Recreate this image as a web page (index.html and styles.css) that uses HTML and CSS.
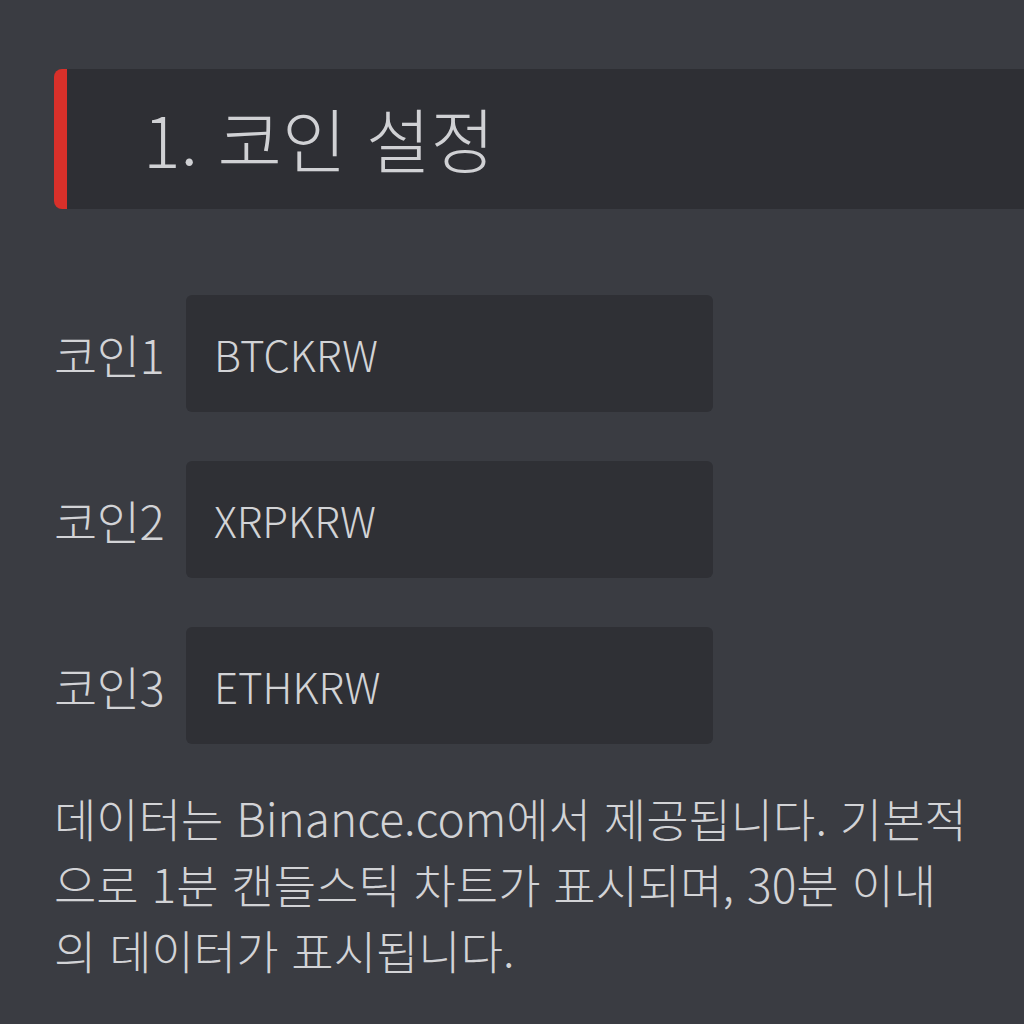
FILE: index.html
```html
<!DOCTYPE html>
<html lang="ko">
<head>
    <meta charset="UTF-8">
    <meta name="viewport" content="width=device-width, initial-scale=1.0">
    <title>코인 설정</title>
    <link rel="stylesheet" href="styles.css">
</head>
<body>
    <div class="settings">
        <div class="section-header">
            <h1>1. 코인 설정</h1>
        </div>
        <div class="coin-list">
            <div class="coin-row">
                <label for="coin1">코인1</label>
                <input type="text" id="coin1" value="BTCKRW">
            </div>
            <div class="coin-row">
                <label for="coin2">코인2</label>
                <input type="text" id="coin2" value="XRPKRW">
            </div>
            <div class="coin-row">
                <label for="coin3">코인3</label>
                <input type="text" id="coin3" value="ETHKRW">
            </div>
        </div>
        <p class="note">데이터는 Binance.com에서 제공됩니다. 기본적으로 1분 캔들스틱 차트가 표시되며, 30분 이내의 데이터가 표시됩니다.</p>
    </div>
</body>
</html>
```

FILE: styles.css
```css
html, body {
    margin: 0;
    height: 100%;
}
body {
    background: #3a3c42;
    color: #d2d3d6;
    font-family: 'Noto Sans CJK KR', 'Noto Sans', sans-serif;
    font-weight: 300;
}
.settings {
    padding: 69px 0 0 54px;
}
.section-header {
    background: #2e2f34;
    border-left: 13px solid #d8302a;
    border-radius: 8px 0 0 8px;
    height: 140px;
    display: flex;
    align-items: center;
    padding-left: 76px;
}
.section-header h1 {
    margin: 0 0 4px;
    font-size: 70px;
    font-weight: 300;
    color: #d0d1d4;
}
.coin-list {
    display: flex;
    flex-direction: column;
    gap: 49px;
    margin-top: 86px;
}
.coin-row {
    display: flex;
    align-items: center;
}
.coin-row label {
    width: 132px;
    font-size: 47px;
    letter-spacing: -0.5px;
}
.coin-row input {
    width: 527px;
    height: 117px;
    box-sizing: border-box;
    background: #2f3035;
    border: none;
    border-radius: 6px;
    padding: 0 28px;
    font-family: 'Noto Sans CJK KR', 'Noto Sans', sans-serif;
    font-weight: 300;
    font-size: 42px;
    color: #d2d3d6;
    outline: none;
}
.note {
    margin: 40px 0 0;
    width: 915px;
    font-size: 46px;
    line-height: 66px;
}
```
